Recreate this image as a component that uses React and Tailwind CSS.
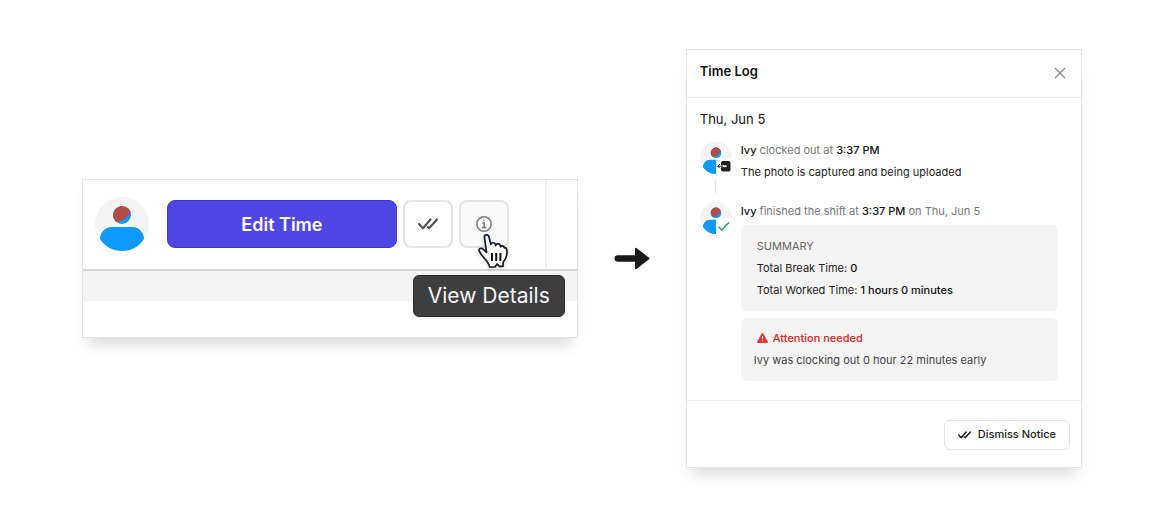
import React from 'react';
import clsx from 'clsx';

const Avatar = ({ className }) => (
    <svg viewBox="0 0 54 54" className={className} aria-hidden="true">
        <circle cx="27" cy="27" r="27" fill="#f4f4f4" />
        <g stroke="#fff" strokeWidth="2" paintOrder="stroke">
            <path d="M16 30H38C44 30 49 36 49 42C44 50 36 54 27 54C18 54 10 50 5 42C5 36 10 30 16 30Z" fill="#0d99ff" />
            <circle cx="27" cy="18" r="9" fill="#0d99ff" />
        </g>
        <path d="M21.5 25.2A9 9 0 1 1 35.5 15C33 20 28 24 21.5 25.2Z" fill="#b54b46" />
    </svg>
);

const DoubleCheck = ({ className, strokeWidth = 2 }) => (
    <svg viewBox="0 0 20 12" fill="none" stroke="currentColor" strokeWidth={strokeWidth} strokeLinecap="round" strokeLinejoin="round" className={className} aria-hidden="true">
        <path d="M1 6L5 10.2L12.5 1.5" />
        <path d="M9.8 9.2L11 10.2L19 1.5" />
    </svg>
);

const InfoIcon = () => (
    <svg viewBox="0 0 16 16" fill="none" stroke="currentColor" strokeWidth="1.6" className="size-4" aria-hidden="true">
        <circle cx="8" cy="8" r="7.2" />
        <path d="M6.2 7H8.2V11.6M5.8 11.6H10.4" />
        <path d="M7.2 4.5H8.8" strokeWidth="1.6" />
    </svg>
);

const HandCursor = ({ className }) => (
    <svg viewBox="0 0 30 34" className={className} aria-hidden="true">
        <path
            d="M6.4 3C6.4 .3 10.4 .2 11 3L12.8 10.5C13 8.4 16.6 8 17.4 10.4L17.7 11.4C18.4 9.4 21.6 9.4 22.3 11.6L22.6 12.8C23.4 11.4 25.8 11.6 26.4 13.8L27.4 13.8C29.8 14.6 29 19 28.7 21C28.4 24 26.4 26.3 25.2 28.2L25 32.4H21.4L19.2 30L16.8 33H11.6C11.4 30 9.6 28.4 8.2 26.3C5.8 23.4 3 21 1.2 16.8C.5 14.3 3.4 13.6 5 15.2L8.6 18.4Z"
            fill="#fff"
            stroke="#111827"
            strokeWidth="1.7"
            strokeLinejoin="round"
        />
        <path d="M14 19V27M18.2 19V27M22.4 19V27" stroke="#111" strokeWidth="2" fill="none" />
    </svg>
);

const ArrowRight = () => (
    <svg viewBox="0 0 36 24" className="h-6 w-9 shrink-0" fill="#191919" aria-hidden="true">
        <path d="M4 9.2H21V2.8Q21 1 22.5 2L35 11.7Q36 12.5 35 13.3L22.5 23Q21 24 21 22.2V15.8H4Q.5 15.8 .5 12.5T4 9.2Z" />
    </svg>
);

const ClockOutIcon = () => (
    <svg viewBox="0 0 16 16" className="size-4" aria-hidden="true">
        <rect x="5" y="3" width="9.5" height="10.5" rx="1.8" fill="#202020" />
        <path d="M10.5 8.2H5" stroke="#fff" strokeWidth="1.8" />
        <path d="M7 8.2H2M4 6L1.8 8.2L4 10.4" stroke="#202020" strokeWidth="1" fill="none" />
    </svg>
);

const CheckIcon = () => (
    <svg viewBox="0 0 16 16" fill="none" stroke="#16a34a" strokeWidth="1.4" className="size-4" aria-hidden="true">
        <path d="M2.5 8.8L5.8 12L13 4.5" />
    </svg>
);

const WarningIcon = () => (
    <svg viewBox="0 0 11 10" className="h-[10px] w-[11px]" aria-hidden="true">
        <path d="M5.5 .9L10.1 9.1H.9Z" fill="#e53535" stroke="#e53535" strokeWidth="1.7" strokeLinejoin="round" />
        <path d="M5.5 3.2V6.2M5.5 7.2V8.3" stroke="#fff" strokeWidth=".9" />
    </svg>
);

const LogAvatar = ({ children }) => (
    <div className="relative size-8 shrink-0">
        <Avatar className="size-8" />
        <span className="absolute top-4 left-4 bg-white">{children}</span>
    </div>
);

const cardClass = 'min-w-0 border border-[#e2e3e5] bg-white shadow-[0_12px_14px_-6px_rgba(0,0,0,0.15)]';

function TimesheetCard() {
    return (
        <section className={clsx(cardClass, 'flex-[496]')}>
            <div className="flex h-[91px] border-b-2 border-[#d5d7d7]">
                <div className="flex flex-1 items-center border-r-2 border-[#f0f0f0] pr-9 pl-3">
                    <Avatar className="size-[54px] shrink-0" />
                    <button type="button" className="ml-[18px] h-12 flex-1 rounded-lg border border-[#4338ca] bg-[#4f46e5] text-[18px] font-semibold text-white">
                        Edit Time
                    </button>
                    <button type="button" aria-label="Approve" className="ml-[6px] flex h-12 w-[50px] items-center justify-center rounded-lg border-2 border-[#e5e5e5] bg-white text-[#555]">
                        <DoubleCheck className="h-3 w-5" strokeWidth={2.2} />
                    </button>
                    <div className="relative ml-[6px]">
                        <button type="button" aria-label="View details" className="flex h-12 w-[50px] items-center justify-center rounded-lg border-2 border-[#e5e5e5] bg-[#fafafa] text-[#808080]">
                            <InfoIcon />
                        </button>
                        <div role="tooltip" className="absolute top-[75px] -right-14 flex h-[42px] w-[152px] items-center justify-center rounded-md border border-[#2d2d2d] bg-[#3e3e3e] text-[21px] whitespace-nowrap text-[#f5f5f5]">
                            View Details
                        </div>
                        <HandCursor className="absolute top-[34px] left-[19px] h-[34px] w-[30px] drop-shadow-sm" />
                    </div>
                </div>
                <div className="w-[30px]" />
            </div>
            <div className="h-[30px] bg-[#f4f4f4]" />
            <div className="h-9" />
        </section>
    );
}

function TimeLogCard() {
    return (
        <section className={clsx(cardClass, 'flex-[396]')}>
            <header className="flex h-12 items-center justify-between border-b border-[#e8e8e8] pr-[15px] pl-[13px]">
                <h2 className="pb-1 text-[13px] leading-5 font-semibold">Time Log</h2>
                <button type="button" aria-label="Close" className="text-[#888]">
                    <svg viewBox="0 0 12 12" className="size-3" fill="none" stroke="currentColor" strokeWidth="1.3">
                        <path d="M1 1L11 11M11 1L1 11" />
                    </svg>
                </button>
            </header>

            <div className="pt-[11px] pr-[23px] pb-[19px] pl-[13px] text-[11px] leading-[22px]">
                <h3 className="text-[13px] leading-5">Thu, Jun 5</h3>
                <ol>
                    <li className="flex gap-[9px] pt-[10px]">
                        <div className="flex flex-col items-center gap-[6px] pt-[3px]">
                            <LogAvatar><ClockOutIcon /></LogAvatar>
                            <div className="h-[13px] w-px bg-[#dedede]" />
                        </div>
                        <div className="min-w-0 flex-1">
                            <p className="text-[#777]">
                                <span className="font-medium text-[#111]">Ivy</span> clocked out at <span className="font-medium text-[#111]">3:37 PM</span>
                            </p>
                            <p className="text-[#222]">The photo is captured and being uploaded</p>
                        </div>
                    </li>
                    <li className="flex gap-[9px] pt-[7px]">
                        <div className="pt-[2px]">
                            <LogAvatar><CheckIcon /></LogAvatar>
                        </div>
                        <div className="min-w-0 flex-1">
                            <p className="text-[#777]">
                                <span className="font-medium text-[#111]">Ivy</span> finished the shift at <span className="font-medium text-[#111]">3:37 PM</span> on Thu, Jun 5
                            </p>
                            <div className="mt-[3px] rounded-md bg-[#f4f4f4] px-4 py-[10px] text-[#222]">
                                <h4 className="text-[#666]">SUMMARY</h4>
                                <p>Total Break Time: <span className="font-medium text-[#111]">0</span></p>
                                <p>Total Worked Time: <span className="font-medium text-[#111]">1 hours 0 minutes</span></p>
                            </div>
                            <div className="mt-[7px] rounded-md bg-[#f4f4f4] px-[13px] pt-[9px] pb-[10px]">
                                <h4 className="flex items-center gap-[5px] pl-[3px] font-medium text-[#dc2626]">
                                    <WarningIcon />
                                    Attention needed
                                </h4>
                                <p className="text-[#444]">Ivy was clocking out 0 hour 22 minutes early</p>
                            </div>
                        </div>
                    </li>
                </ol>
            </div>

            <footer className="flex justify-end border-t border-[#ececec] pt-[19px] pr-[11px] pb-[17px]">
                <button type="button" className="flex h-[30px] items-center gap-[7px] rounded-md border border-[#dedede] px-[13px] text-[11px] font-medium text-[#222]">
                    <DoubleCheck className="h-[8px] w-[13px]" strokeWidth={2.4} />
                    Dismiss Notice
                </button>
            </footer>
        </section>
    );
}

export default function App() {
    return (
        <main className="flex min-h-screen items-center gap-9 bg-white pr-[72px] pb-[2px] pl-[82px] font-['Inter',sans-serif] text-[#111]">
            <TimesheetCard />
            <ArrowRight />
            <TimeLogCard />
        </main>
    );
}
